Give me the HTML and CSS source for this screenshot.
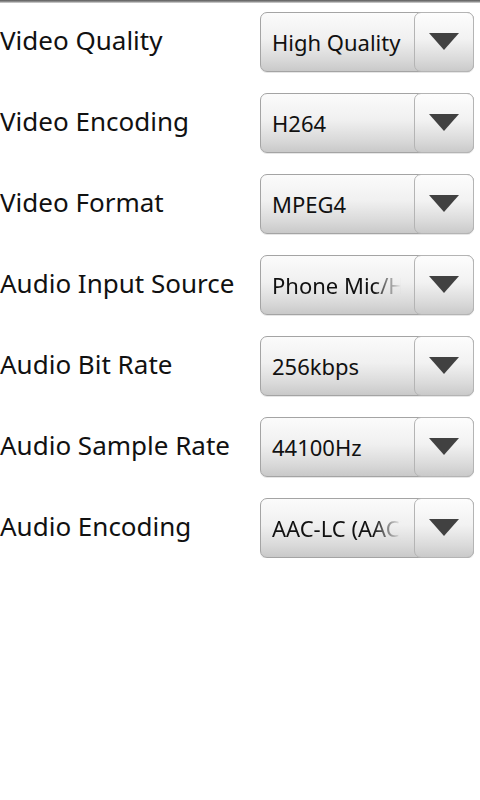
FILE: index.html
```html
<!DOCTYPE html>
<html>
<head>
<meta charset="utf-8">
<link rel="stylesheet" href="styles.css">
</head>
<body>
<div class="top-line"></div>
<div class="list">
  <div class="row"><div class="label">Video Quality</div><div class="spinner"><div class="value"><span>High Quality</span></div><div class="arrow"><svg width="30" height="17" viewBox="0 0 30 17"><polygon points="0,0 30,0 15,17" fill="#414141"/></svg></div></div></div>
  <div class="row"><div class="label">Video Encoding</div><div class="spinner"><div class="value"><span>H264</span></div><div class="arrow"><svg width="30" height="17" viewBox="0 0 30 17"><polygon points="0,0 30,0 15,17" fill="#414141"/></svg></div></div></div>
  <div class="row"><div class="label">Video Format</div><div class="spinner"><div class="value"><span>MPEG4</span></div><div class="arrow"><svg width="30" height="17" viewBox="0 0 30 17"><polygon points="0,0 30,0 15,17" fill="#414141"/></svg></div></div></div>
  <div class="row"><div class="label">Audio Input Source</div><div class="spinner"><div class="value fade"><span>Phone Mic/Headset</span></div><div class="arrow"><svg width="30" height="17" viewBox="0 0 30 17"><polygon points="0,0 30,0 15,17" fill="#414141"/></svg></div></div></div>
  <div class="row"><div class="label">Audio Bit Rate</div><div class="spinner"><div class="value"><span>256kbps</span></div><div class="arrow"><svg width="30" height="17" viewBox="0 0 30 17"><polygon points="0,0 30,0 15,17" fill="#414141"/></svg></div></div></div>
  <div class="row"><div class="label">Audio Sample Rate</div><div class="spinner"><div class="value"><span>44100Hz</span></div><div class="arrow"><svg width="30" height="17" viewBox="0 0 30 17"><polygon points="0,0 30,0 15,17" fill="#414141"/></svg></div></div></div>
  <div class="row"><div class="label">Audio Encoding</div><div class="spinner"><div class="value fade"><span>AAC-LC (AAC)</span></div><div class="arrow"><svg width="30" height="17" viewBox="0 0 30 17"><polygon points="0,0 30,0 15,17" fill="#414141"/></svg></div></div></div>
</div>
</body>
</html>
```
FILE: styles.css
```css
html, body {
  margin: 0;
  padding: 0;
  background: #ffffff;
  font-family: "Noto Sans", "Open Sans", sans-serif;
}
.top-line {
  height: 3px;
  background: linear-gradient(to bottom, #5a5a5a 0%, #8c8c8c 50%, #dcdcdc 100%);
}
.list {
  display: flex;
  flex-direction: column;
  gap: 21px;
  padding-top: 9px;
}
.row {
  display: flex;
  align-items: center;
  height: 60px;
}
.label {
  flex: none;
  width: 260px;
  font-size: 26px;
  color: #111;
  white-space: nowrap;
  line-height: 1;
  margin-top: -4px;
}
.spinner {
  flex: none;
  box-sizing: border-box;
  width: 214px;
  height: 60px;
  border: 1px solid #a4a4a4;
  border-radius: 7px;
  background: linear-gradient(to bottom, #fbfbfb 0%, #f0f0f0 45%, #d9d9d9 80%, #c9c9c9 100%);
  display: flex;
  box-shadow: 0 1px 0 #e6e6e6;
}
.value {
  flex: 1;
  min-width: 0;
  overflow: hidden;
  white-space: nowrap;
  padding-left: 11px;
  display: flex;
  align-items: center;
  font-size: 22px;
  color: #111;
}
.value span {
  display: block;
}
.value.fade {
  -webkit-mask-image: linear-gradient(to right, #000 0, #000 112px, transparent 140px);
  mask-image: linear-gradient(to right, #000 0, #000 112px, transparent 140px);
}
.arrow {
  flex: none;
  box-sizing: border-box;
  width: 60px;
  margin: -1px -1px -1px 0;
  border: 1px solid #b4b4b4;
  border-radius: 7px;
  background: linear-gradient(to bottom, #fdfdfd 0%, #f2f2f2 45%, #dadada 80%, #cacaca 100%);
  display: flex;
  align-items: center;
  justify-content: center;
}
.arrow svg {
  display: block;
  margin-bottom: 2px;
}
```
